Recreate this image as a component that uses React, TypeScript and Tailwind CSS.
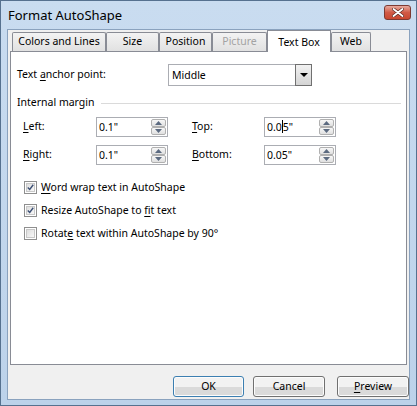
import type { ReactNode } from 'react';

const tabs = [
  { label: 'Colors and Lines', width: 'w-[94px]' },
  { label: 'Size', width: 'w-[53px]' },
  { label: 'Position', width: 'w-[53px]' },
  { label: 'Picture', width: 'w-[55px]', disabled: true },
  { label: 'Text Box', width: 'w-[64px]', active: true },
  { label: 'Web', width: 'w-[40px]' },
];

function Key({ children }: { children: ReactNode }) {
  return <span className="underline decoration-1 underline-offset-[2px]">{children}</span>;
}

function Arrow({ up }: { up?: boolean }) {
  return (
    <svg width="7" height="4" viewBox="0 0 7 4">
      <path d={up ? 'M3.5 0 L7 4 L0 4 Z' : 'M0 0 L7 0 L3.5 4 Z'} fill="#5b6a80" />
    </svg>
  );
}

function SpinField({ value, caret }: { value: string; caret?: number }) {
  return (
    <div className="flex h-[20px] w-[72px] border border-[#abadb3] bg-white">
      <div className="flex-1 pl-[2px] leading-[18px]">
        {caret === undefined ? (
          value
        ) : (
          <>
            {value.slice(0, caret)}
            <span className="inline-block h-[13px] w-px align-[-2px] bg-black" />
            {value.slice(caret)}
          </>
        )}
      </div>
      {/* up / down buttons */}
      <div className="flex w-[16px] flex-col p-px pl-0">
        <div className="flex flex-1 items-center justify-center rounded-[2px] border border-[#b0b0b0] bg-gradient-to-b from-[#f7f7f7] to-[#e0e0e0]">
          <Arrow up />
        </div>
        <div className="flex flex-1 items-center justify-center rounded-[2px] border border-[#b0b0b0] bg-gradient-to-b from-[#f7f7f7] to-[#e0e0e0]">
          <Arrow />
        </div>
      </div>
    </div>
  );
}

function CheckBox({ checked, children }: { checked?: boolean; children: ReactNode }) {
  return (
    <div className="flex h-[23px] items-center">
      <div className="flex h-[13px] w-[13px] items-center justify-center border border-[#8f8f8f] bg-white p-px">
        <div className="flex h-full w-full items-center justify-center border border-[#c8c8c8] bg-gradient-to-br from-[#dedede] to-[#f8f8f8]">
          {checked && (
            <svg width="9" height="9" viewBox="0 0 9 9">
              <path d="M1 4.5 L3.5 7 L8 1" fill="none" stroke="#3b4f74" strokeWidth="1.8" />
            </svg>
          )}
        </div>
      </div>
      <span className="ml-[4px]">{children}</span>
    </div>
  );
}

function DialogButton({ children, primary }: { children: ReactNode; primary?: boolean }) {
  return (
    <button
      className={`h-[21px] w-[72px] rounded-[3px] border bg-gradient-to-b from-[#f2f2f2] from-50% to-[#dadada] to-50% leading-[19px] shadow-[inset_0_0_0_1px_#fcfcfc] ${
        primary ? 'border-[#3c7fb1] shadow-[inset_0_0_0_1px_#c6e6f8]' : 'border-[#707070]'
      }`}
    >
      {children}
    </button>
  );
}

export default function App() {
  return (
    <div className="flex h-[406px] w-[417px] flex-col border border-[#56718f] bg-gradient-to-b from-[#c9dcf0] to-[#bcd2ea] font-['Noto_Sans',sans-serif] text-[10.5px] text-black">
      {/* Title bar */}
      <div className="flex h-[28px] shrink-0 items-start justify-between">
        <div className="mt-[5px] pl-[7px] text-[13px] leading-[18px]">Format AutoShape</div>
        <div className="mr-[5px] mt-[4px] flex h-[15px] w-[27px] items-center justify-center rounded-[3px] border border-[#7c3a33] bg-gradient-to-b from-[#e6a99e] via-[#d15a46] to-[#c9472f]">
          <svg width="12" height="9" viewBox="0 0 12 9">
            <path d="M1.5 1 L10.5 8 M10.5 1 L1.5 8" stroke="#5a2a24" strokeWidth="3.2" strokeLinecap="round" />
            <path d="M1.5 1 L10.5 8 M10.5 1 L1.5 8" stroke="#ffffff" strokeWidth="1.8" strokeLinecap="round" />
          </svg>
        </div>
      </div>

      {/* Client area */}
      <div className="mx-[6px] mb-[5px] flex flex-1 flex-col border border-[#8aa2be] bg-[#f0f0f0]">
        {/* Tab strip */}
        <div className="flex h-[21px] items-end pl-[4px]">
          {tabs.map((tab) =>
            tab.active ? (
              <div
                key={tab.label}
                className={`relative z-10 -mb-px flex h-[22px] ${tab.width} items-start justify-center border border-b-0 border-[#898c95] bg-white pt-[3px] leading-[16px]`}
              >
                {tab.label}
              </div>
            ) : (
              <div
                key={tab.label}
                className={`flex h-[19px] ${tab.width} items-center justify-center rounded-t-[2px] border border-b-0 border-[#898c95] bg-gradient-to-b from-[#f3f3f3] to-[#e1e1e1] ${
                  tab.disabled ? 'text-[#a3a3a3]' : ''
                }`}
              >
                {tab.label}
              </div>
            )
          )}
        </div>

        {/* Tab page */}
        <div className="ml-[2px] flex h-[314px] w-[397px] flex-col border border-[#898c95] bg-white pl-[6px] pr-[5px]">
          <div className="mt-[12px] flex h-[22px] items-center">
            <div className="w-[151px]">
              Text <Key>a</Key>nchor point:
            </div>
            <div className="flex h-[22px] w-[144px] border border-r-0 border-[#abadb3]">
              <div className="flex-1 pl-[3px] leading-[20px]">Middle</div>
            </div>
            <div className="-ml-[17px] flex h-[22px] w-[17px] items-center justify-center border border-[#707070] bg-gradient-to-b from-[#f2f2f2] to-[#d4d4d4]">
              <svg width="8" height="4" viewBox="0 0 8 4">
                <path d="M0 0 L8 0 L4 4 Z" fill="#000" />
              </svg>
            </div>
          </div>

          <div className="mt-[9px] flex h-[16px] items-center gap-[6px]">
            <span>Internal margin</span>
            <div className="h-px flex-1 bg-[#dadada]" />
          </div>

          <div className="mt-[6px] flex h-[20px] items-center pl-[6px]">
            <div className="w-[73px]">
              <Key>L</Key>eft:
            </div>
            <SpinField value={'0.1"'} />
            <div className="ml-[24px] w-[72px]">
              <Key>T</Key>op:
            </div>
            <SpinField value={'0.05"'} caret={3} />
          </div>

          <div className="mt-[8px] flex h-[20px] items-center pl-[6px]">
            <div className="w-[73px]">
              <Key>R</Key>ight:
            </div>
            <SpinField value={'0.1"'} />
            <div className="ml-[24px] w-[72px]">
              <Key>B</Key>ottom:
            </div>
            <SpinField value={'0.05"'} />
          </div>

          <div className="mt-[11px] flex flex-col pl-[7px]">
            <CheckBox checked>
              <Key>W</Key>ord wrap text in AutoShape
            </CheckBox>
            <CheckBox checked>
              Resize AutoShape to <Key>f</Key>it text
            </CheckBox>
            <CheckBox>
              Rotat<Key>e</Key> text within AutoShape by 90°
            </CheckBox>
          </div>
        </div>

        {/* Dialog buttons */}
        <div className="mt-[11px] flex pl-[165px]">
          <DialogButton primary>OK</DialogButton>
          <div className="ml-[9px]">
            <DialogButton>Cancel</DialogButton>
          </div>
          <div className="ml-[12px]">
            <DialogButton>
              <Key>P</Key>review
            </DialogButton>
          </div>
        </div>
      </div>
    </div>
  );
}
